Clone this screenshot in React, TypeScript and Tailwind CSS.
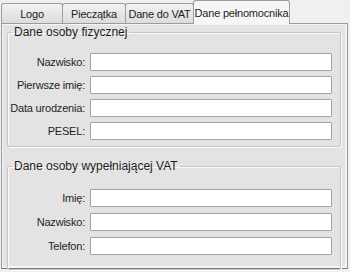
import React from 'react';

const tabs = ['Logo', 'Pieczątka', 'Dane do VAT', 'Dane pełnomocnika'];
const tabWidths = ['w-[62px]', 'w-[64px]', 'w-[69px]', 'w-[97px]'];

function Row({ label }: { label: string }) {
  return (
    <div className="flex items-center h-[18px]">
      <div className="w-[78px] text-right pr-[1px] text-[11px] text-[#1e1e1e] leading-none whitespace-nowrap tracking-[-0.2px]">
        {label}
      </div>
      <div className="ml-[4px] w-[242px] h-[18px] bg-white border border-[#a4a4a4] rounded-[1px] shrink-0" />
    </div>
  );
}

function Group({ title, rows, pad, gap }: { title: string; rows: string[]; pad: string; gap: string }) {
  return (
    <fieldset className="border border-[#c6c6c6] shadow-[inset_1px_1px_0_#fafafa,1px_1px_0_#fafafa] rounded-[2px] mx-[5px] w-[334px]">
      <legend className="ml-[4px] px-[2px] text-[12px] leading-[14px] text-[#1e1e1e] whitespace-nowrap">{title}</legend>
      <div className={`flex flex-col ${pad} ${gap}`}>
        {rows.map(r => (
          <Row key={r} label={r} />
        ))}
      </div>
    </fieldset>
  );
}

export default function App() {
  return (
    <div
      className="w-[350px] h-[272px] bg-[#f0f0f0] overflow-hidden"
      style={{ fontFamily: '"Liberation Sans", Arial, sans-serif' }}
    >
      {/* Tabs */}
      <div className="flex items-end h-[23px] pl-[1px] relative z-10">
        {tabs.map((t, i) => {
          const active = i === tabs.length - 1;
          return (
            <div
              key={t}
              className={`${tabWidths[i]} flex items-center justify-center pt-[1px] text-[11px] text-[#1e1e1e] whitespace-nowrap tracking-[-0.2px] border border-[#9c9c9c] rounded-t-[3px] ${
                active
                  ? 'h-[24px] -mb-px border-b-0 bg-[#f6f6f6] -ml-px'
                  : 'h-[20px] border-b-0 bg-gradient-to-b from-[#f2f2f2] to-[#dcdcdc]' + (i > 0 ? ' -ml-px' : '')
              }`}
            >
              {t}
            </div>
          );
        })}
      </div>

      {/* Panel */}
      <div className="ml-[1px] w-[347px] h-[246px] border border-[#9c9c9c] border-b-[#7a7a7a] bg-[#e3e3e3] shadow-[inset_-2px_-2px_0_#f4f4f4,inset_1px_1px_0_#f4f4f4] pt-[1px]">
        <Group
          title="Dane osoby fizycznej"
          rows={['Nazwisko:', 'Pierwsze imię:', 'Data urodzenia:', 'PESEL:']}
          pad="pt-[14px] pb-[6px]"
          gap="gap-[5px]"
        />
        <div className="h-[12px]" />
        <Group
          title="Dane osoby wypełniającej VAT"
          rows={['Imię:', 'Nazwisko:', 'Telefon:']}
          pad="pt-[16px] pb-[14px]"
          gap="gap-[6px]"
        />
      </div>
    </div>
  );
}
